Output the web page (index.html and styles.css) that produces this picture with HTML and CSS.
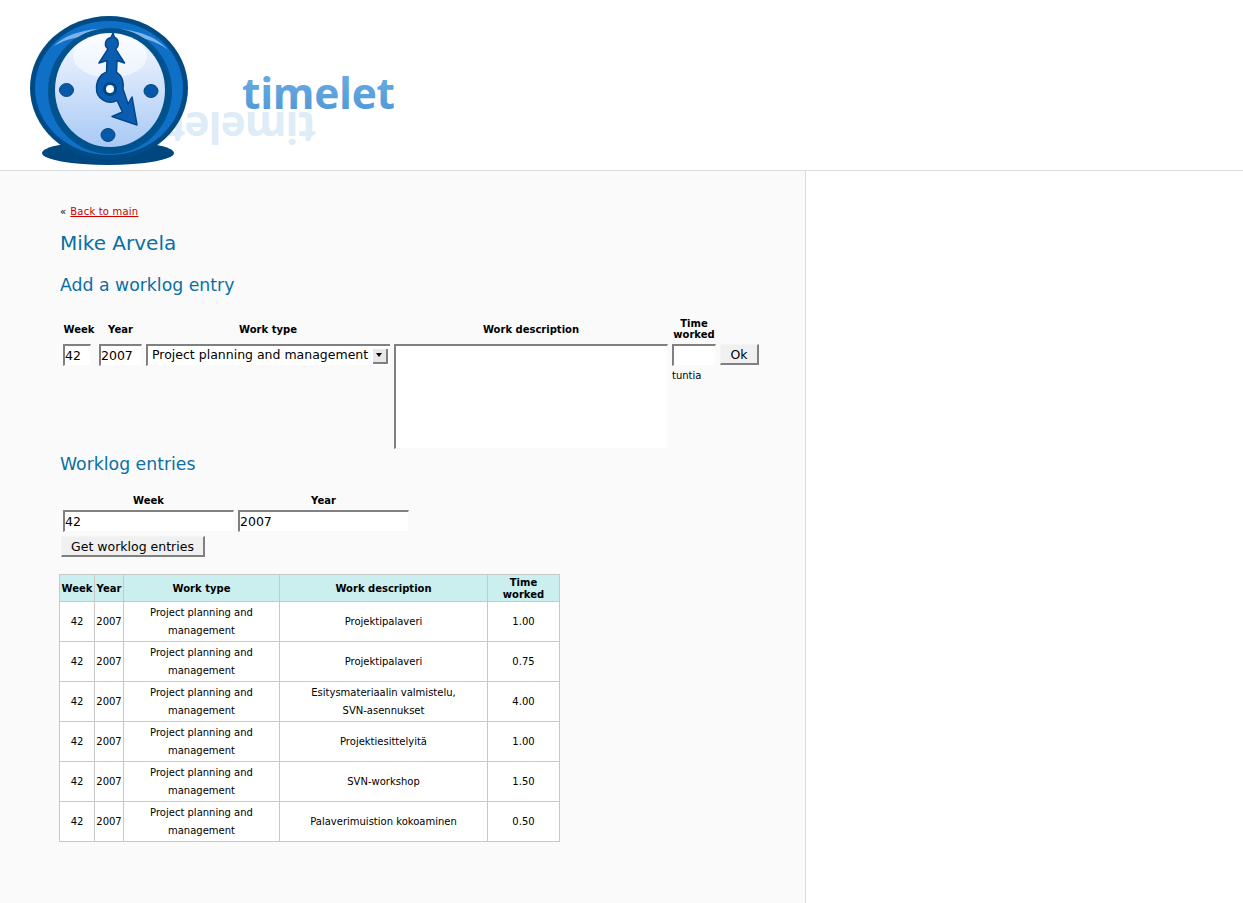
FILE: index.html
```html
<!DOCTYPE html>
<html lang="en">
<head>
<meta charset="utf-8">
<title>timelet</title>
<link rel="stylesheet" href="styles.css">
</head>
<body>
<header class="top">
  <svg class="logo" width="420" height="170" viewBox="0 0 420 170" xmlns="http://www.w3.org/2000/svg">
    <defs>
      <linearGradient id="face" x1="0" y1="0" x2="0" y2="1">
        <stop offset="0" stop-color="#f4f8ff"/>
        <stop offset="1" stop-color="#a9c9f5"/>
      </linearGradient>
      <linearGradient id="word" x1="0" y1="0" x2="0" y2="1">
        <stop offset="0" stop-color="#6fb0e2"/>
        <stop offset="1" stop-color="#4b95d6"/>
      </linearGradient>
    </defs>
    <text class="word" x="-316" y="-112" fill="#deecf8" transform="rotate(180)" textLength="149" lengthAdjust="spacing">timelet</text>
    <ellipse cx="108" cy="153" rx="66" ry="12" fill="#00467f"/>
    <ellipse cx="109" cy="88" rx="79" ry="72" fill="#004a85"/>
    <ellipse cx="109" cy="88" rx="74" ry="67" fill="#0f70c8"/>
    <path d="M54 46 C76 22 146 22 168 50 C146 30 78 30 54 46Z" fill="#7db4ea"/>
    <ellipse cx="110" cy="91" rx="62" ry="63" fill="#00528f"/>
    <ellipse cx="110" cy="90" rx="55" ry="57" fill="url(#face)"/>
    <ellipse cx="110" cy="56" rx="37" ry="22" fill="#ffffff" opacity="0.55"/>
    <ellipse cx="66.500" cy="90" rx="7" ry="6.500" fill="#0858a8" stroke="#004a85" stroke-width="1"/>
    <ellipse cx="151" cy="91" rx="7" ry="6.500" fill="#0858a8" stroke="#004a85" stroke-width="1"/>
    <ellipse cx="108" cy="135" rx="7" ry="6.500" fill="#0858a8" stroke="#004a85" stroke-width="1"/>
    <path d="M113 33 L114.500 37.500 C119 39 119.500 46 115.500 49 L124.500 63 L117 60.500 L116.500 72 C121 75 124 81 123 89 L128 104 L132 97 L137 125 L112 116.500 L122.500 112 L117 100.500 C108 105 96 99 96.500 88 C96.500 80 101 74 106.500 72 L107 60.500 L99 63 L108 49 C104 46 104.500 39 111 37.500Z" fill="#0a5db0" stroke="#00478a" stroke-width="1.500" stroke-linejoin="round"/>
    <circle cx="110" cy="89" r="7" fill="#00478a"/>
    <circle cx="110" cy="89" r="4" fill="#ffffff"/>
    <text class="word" x="242" y="109" fill="url(#word)" textLength="153" lengthAdjust="spacing">timelet</text>
  </svg>
</header>
<div class="page">
  <main class="main">
    <p class="crumb">« <a href="#">Back to main</a></p>
    <h1>Mike Arvela</h1>
    <h2 class="add-title">Add a worklog entry</h2>
    <form>
      <table class="entry">
        <tr>
          <th class="week-head">Week</th><th>Year</th><th>Work type</th><th>Work description</th><th class="time-head">Time worked</th><th></th>
        </tr>
        <tr>
          <td><input class="field w-week" type="text" value="42"></td>
          <td><input class="field w-year" type="text" value="2007"></td>
          <td>
            <span class="select">Project planning and management<span class="arrow"></span></span>
          </td>
          <td><textarea class="field area"></textarea></td>
          <td><input class="field w-time" type="text"><div class="unit">tuntia</div></td>
          <td><button class="btn ok" type="button">Ok</button></td>
        </tr>
      </table>
    </form>
    <h2 class="entries-title">Worklog entries</h2>
    <form>
      <table class="filter">
        <tr><th>Week</th><th>Year</th></tr>
        <tr>
          <td><input class="field w-wide" type="text" value="42"></td>
          <td><input class="field w-wide" type="text" value="2007"></td>
        </tr>
      </table>
      <button class="btn get" type="button">Get worklog entries</button>
    </form>
    <table class="log">
      <colgroup><col class="c1"><col class="c2"><col class="c3"><col class="c4"><col class="c5"></colgroup>
      <thead>
        <tr><th>Week</th><th>Year</th><th>Work type</th><th>Work description</th><th>Time worked</th></tr>
      </thead>
      <tbody>
        <tr><td>42</td><td>2007</td><td>Project planning and management</td><td>Projektipalaveri</td><td>1.00</td></tr>
        <tr><td>42</td><td>2007</td><td>Project planning and management</td><td>Projektipalaveri</td><td>0.75</td></tr>
        <tr><td>42</td><td>2007</td><td>Project planning and management</td><td>Esitysmateriaalin valmistelu, SVN-asennukset</td><td>4.00</td></tr>
        <tr><td>42</td><td>2007</td><td>Project planning and management</td><td>Projektiesittelyitä</td><td>1.00</td></tr>
        <tr><td>42</td><td>2007</td><td>Project planning and management</td><td>SVN-workshop</td><td>1.50</td></tr>
        <tr><td>42</td><td>2007</td><td>Project planning and management</td><td>Palaverimuistion kokoaminen</td><td>0.50</td></tr>
      </tbody>
    </table>
  </main>
</div>
</body>
</html>
```
FILE: styles.css
```css
* { box-sizing: border-box; }
html, body { margin: 0; padding: 0; height: 100%; }
body {
  background: #fff;
  color: #000;
  font-family: "DejaVu Sans", Verdana, sans-serif;
  font-size: 10px;
  overflow: hidden;
}
.top {
  height: 171px;
  border-bottom: 1px solid #dcdcdc;
  background: #fff;
}
.logo { display: block; }
.word {
  font-family: "Open Sans", sans-serif;
  font-weight: 700;
  font-size: 42.500px;
}
.page { height: 732px; }
.main {
  width: 806px;
  height: 100%;
  background: #fafafa;
  border-right: 1px solid #dcdcdc;
  padding: 35px 0 0 60px;
}
.crumb { margin: 0; height: 12px; line-height: 12px; font-size: 10px; }
.crumb a { color: #cc0000; letter-spacing: 0.200px; margin-left: 1px; }
h1, h2 { margin: 0; font-weight: normal; color: #0a6fa5; }
h1 { font-size: 20px; line-height: 24px; margin-top: 13px; }
h2 { font-size: 17.300px; line-height: 22px; }
.add-title { margin-top: 19px; }
.entries-title { margin-top: 1px; }
table { border-collapse: separate; border-spacing: 2px; }
.entry { margin-top: 19px; }
.entry th, .filter th {
  padding: 1px;
  font-size: 10px;
  line-height: 11px;
  font-weight: bold;
  text-align: center;
  vertical-align: middle;
}
.entry td, .filter td { padding: 1px; vertical-align: top; }
.week-head { width: 34px; }
.time-head { width: 46px; }
.field {
  display: block;
  height: 22px;
  margin: 0;
  padding: 0;
  font-family: "DejaVu Sans", Verdana, sans-serif;
  font-size: 12.500px;
  color: #000;
  background: #fff;
  border-style: solid;
  border-width: 2px 1px 1px 2px;
  border-color: #808080 #fafafa #fafafa #808080;
  border-radius: 0;
  outline: none;
  resize: none;
}
.w-week { width: 28px; }
.w-year { width: 43px; }
.w-time { width: 44px; }
.w-wide { width: 171px; }
.area { width: 274px; height: 105px; }
.select {
  display: flex;
  align-items: flex-start;
  justify-content: space-between;
  width: 244px;
  height: 22px;
  padding: 0 0 0 4px;
  font-size: 12.500px;
  line-height: 18px;
  background: #fff;
  border-style: solid;
  border-width: 2px 0 1px 2px;
  border-color: #808080 #fafafa #fafafa #808080;
  white-space: nowrap;
}
.arrow {
  position: relative;
  display: block;
  width: 15px;
  height: 15px;
  margin: 3px 2px 0 0;
  background: #e8e8e8;
  border-right: 2px solid #808080;
  border-bottom: 2px solid #808080;
}
.arrow::after {
  content: "";
  position: absolute;
  left: 3px;
  top: 4px;
  border-style: solid;
  border-width: 4px 3.500px 0;
  border-color: #000 transparent transparent;
}
.unit { margin-top: 4px; font-size: 10px; line-height: 12px; }
.btn {
  display: block;
  margin: 0;
  padding: 0;
  height: 21px;
  font-family: "DejaVu Sans", Verdana, sans-serif;
  font-size: 12.500px;
  color: #000;
  background: #f0f0f0;
  border-style: solid;
  border-width: 1px 2px 2px 1px;
  border-color: #f4f4f4 #808080 #808080 #f4f4f4;
}
.ok { width: 39px; }
.get { width: 144px; margin: 1px 0 0 1px; }
.filter { margin-top: 17px; }
.log {
  border-collapse: collapse;
  table-layout: fixed;
  width: 501px;
  margin-top: 17px;
  margin-left: -1px;
  background: #fff;
}
.c1 { width: 35px; }
.c2 { width: 29px; }
.c3 { width: 156px; }
.c4 { width: 208px; }
.c5 { width: 72px; }
.log th, .log td {
  border: 1px solid #c8c8c8;
  text-align: center;
  vertical-align: middle;
}
.log th {
  height: 27px;
  padding: 2px 1px 0;
  background: #cbeeef;
  font-size: 10px;
  line-height: 12px;
  font-weight: bold;
}
.log td {
  height: 40px;
  padding: 1px 20px;
  font-size: 10px;
  line-height: 18px;
}
.log td:nth-child(-n+2) { padding: 1px; }
.log td:nth-child(3) { padding: 1px 6px; }
```
